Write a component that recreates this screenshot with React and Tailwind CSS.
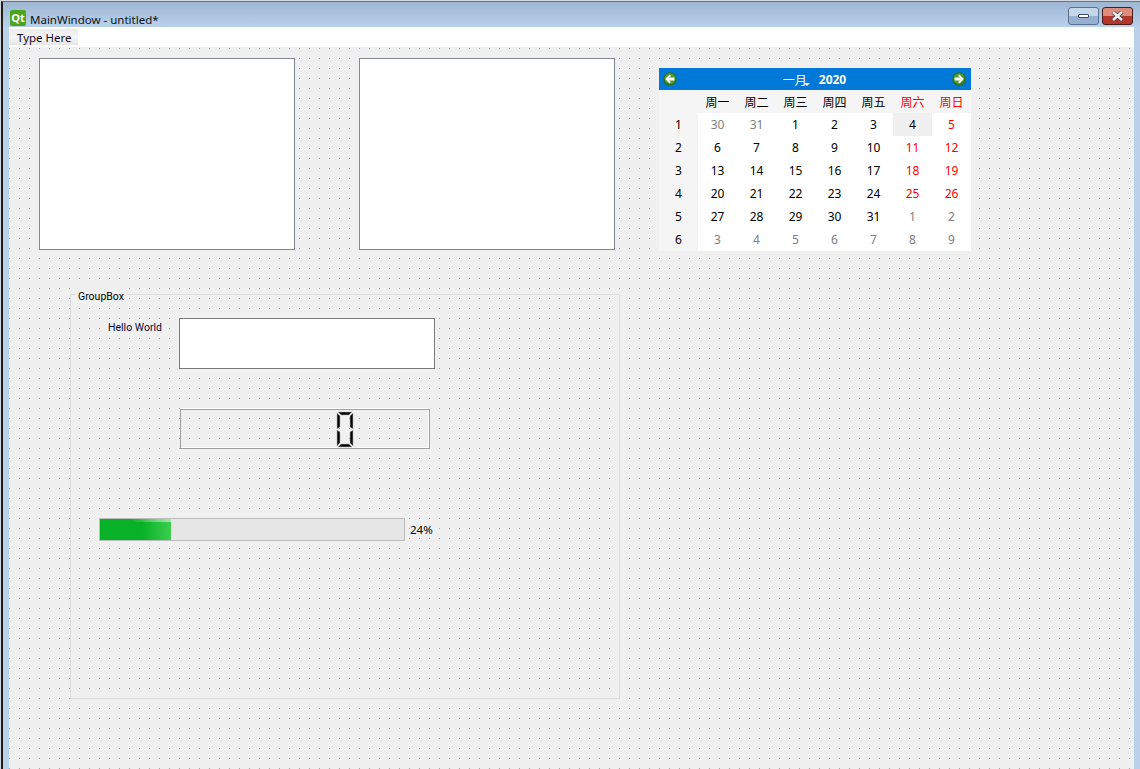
// Qt Designer form preview
const weekDays = ["周一", "周二", "周三", "周四", "周五", "周六", "周日"];

const weeks = [
  [30, 31, 1, 2, 3, 4, 5],
  [6, 7, 8, 9, 10, 11, 12],
  [13, 14, 15, 16, 17, 18, 19],
  [20, 21, 22, 23, 24, 25, 26],
  [27, 28, 29, 30, 31, 1, 2],
  [3, 4, 5, 6, 7, 8, 9],
];

const isOtherMonth = (row, col) =>
  (row === 0 && col < 2) || (row === 4 && col > 4) || row === 5;

const NavArrow = ({ flip }) => (
  <svg width="14" height="14" viewBox="0 0 14 14" className={flip ? "-scale-x-100" : ""}>
    <circle cx="7" cy="7" r="6.8" fill="#2a7418" />
    <circle cx="7" cy="6.6" r="5.4" fill="#4f9c30" />
    <path d="M2.2 7 L6.6 2.6 L8 4 L6 5.6 L11.4 5.6 L11.4 8.4 L6 8.4 L8 10 L6.6 11.4 Z" fill="#ffffff" />
  </svg>
);

const Calendar = () => (
  <div className="mt-[10px] ml-[44px] w-[312px] h-[183px] font-['Noto_Sans','Noto_Sans_CJK_SC',sans-serif] text-[12px]">
    {/* header */}
    <div className="h-[22px] bg-[#0078d7] flex items-center justify-between pl-[4px] pr-[5px] text-white">
      <NavArrow />
      <div className="flex items-center font-bold pt-[2px]">
        <span className="relative font-['Noto_Sans_CJK_SC',sans-serif] font-normal">
          一月
          <span className="absolute right-[-3px] bottom-[3px] w-0 h-0 border-x-[3px] border-x-transparent border-t-[3px] border-t-white" />
        </span>
        <span className="ml-[12px]">2020</span>
      </div>
      <NavArrow flip />
    </div>

    <div className="grid grid-cols-[repeat(8,39px)] auto-rows-[23px] bg-white">
      <div className="bg-[#f5f5f5]" />
      {weekDays.map((d, i) => (
        <div
          key={d}
          className={`bg-[#f5f5f5] flex items-center justify-center font-['Noto_Sans_CJK_SC',sans-serif] ${i > 4 ? "text-[#ff0000]" : "text-black"}`}
        >
          {d}
        </div>
      ))}
      {weeks.map((week, r) => [
        <div key={`n${r}`} className="bg-[#f5f5f5] flex items-center justify-center text-black">
          {r + 1}
        </div>,
        ...week.map((day, c) => {
          const selected = r === 0 && c === 5;
          let color = "text-black";
          if (isOtherMonth(r, c)) color = "text-[#808080]";
          else if (c > 4 && !selected) color = "text-[#ff0000]";
          return (
            <div
              key={`${r}-${c}`}
              className={`flex items-center justify-center ${color} ${selected ? "bg-[#f0f0f0]" : ""}`}
            >
              {day}
            </div>
          );
        }),
      ])}
    </div>
  </div>
);

const LcdZero = () => (
  <svg width="18" height="37" viewBox="0 0 18 37">
    <g fill="#000" stroke="#b5b5b5" strokeWidth="0.6">
      <path d="M2 1 L16 1 L13 4 L5 4 Z" />
      <path d="M2 36 L16 36 L13 33 L5 33 Z" />
      <path d="M1 2 L4 5 L4 16 L1 18 Z" />
      <path d="M1 19 L4 21 L4 32 L1 35 Z" />
      <path d="M17 2 L14 5 L14 16 L17 18 Z" />
      <path d="M17 19 L14 21 L14 32 L17 35 Z" />
    </g>
  </svg>
);

export default function App() {
  return (
    <div className="w-[1140px] h-[769px] overflow-hidden bg-[#d4d8de] pl-[1px] pt-[1px]">
      <div className="h-full bg-[#b9d1ea] border-l-[2px] border-t-[1px] border-l-[#1c1c1c] border-t-[#6d7480] font-['Noto_Sans',sans-serif] text-[11.5px] text-black flex flex-col">
        {/* title bar */}
        <div className="h-[25px] shrink-0 flex items-start pl-[7px] pr-[7px] bg-[linear-gradient(#9db6d2,#b9d1ea)]">
          <div className="w-[16px] h-[16px] mt-[8px] rounded-[2px] bg-[#4ba51c] text-white text-[11px] font-bold leading-[15px] text-center">
            Qt
          </div>
          <span className="ml-[4px] mt-[9px] leading-[17px] text-[#0b1524]">MainWindow - untitled*</span>
          <div className="ml-auto flex gap-[3px] mt-[5px] ml-auto">
            <div className="w-[31px] h-[18px] rounded-[3px] border border-[#5c6f8c] bg-[linear-gradient(#c4d6ea_50%,#96b0cf_50%)] flex items-center justify-center">
              <div className="w-[11px] h-[4px] border border-[#3e4a5c] bg-white rounded-[1px]" />
            </div>
            <div className="w-[31px] h-[18px] rounded-[3px] border border-[#4a1d1a] bg-[linear-gradient(#dc8b7c_50%,#b5372a_50%)] flex items-center justify-center">
              <svg width="13" height="10" viewBox="0 0 13 10">
                <path d="M2 1 L11 9 M11 1 L2 9" stroke="#3e3e46" strokeWidth="4" />
                <path d="M2 1 L11 9 M11 1 L2 9" stroke="#f0f0f2" strokeWidth="2.6" />
              </svg>
            </div>
          </div>
        </div>

        {/* body */}
        <div className="flex-1 ml-[6px] mr-[6px] flex flex-col min-h-0">
          {/* menu bar */}
          <div className="h-[20px] shrink-0 bg-white pt-[2px]">
            <div className="w-[69px] h-[16px] bg-[linear-gradient(#ececec,#f5f5f5_50%,#e6e6e6)] pl-[8px] leading-[18px] text-[#140a1e]">
              Type Here
            </div>
          </div>

          {/* form canvas with the designer grid */}
          <div className="flex-1 min-h-0 bg-[#a0a0a0] bg-[linear-gradient(90deg,#f0f0f0_9px,transparent_9px),linear-gradient(#f0f0f0_9px,transparent_9px)] bg-[size:10px_10px] bg-[position:-9px_-8px]">
            <div className="flex items-start pl-[30px] pt-[11px]">
              <div className="w-[256px] h-[192px] bg-white border border-[#828790]" />
              <div className="w-[256px] h-[192px] ml-[64px] bg-white border border-[#828790]" />
              <Calendar />
            </div>

            {/* group box */}
            <div className="relative ml-[61px] mt-[43px] w-[550px] h-[405px] border border-[#dcdcdc]">
              <span className="absolute left-[4px] top-[-7px] px-[3px] h-[17px] leading-[17px] bg-[#f0f0f0] font-['Roboto',sans-serif] text-[10.5px]">
                GroupBox
              </span>

              <div className="flex items-start mt-[23px]">
                <span className="ml-[37px] w-[71px] mt-[1px] leading-[17px] text-[#0a0a3c] font-['Roboto',sans-serif] text-[10.5px]">
                  Hello World
                </span>
                <div className="w-[256px] h-[51px] bg-white border border-[#7a7a7a]" />
              </div>

              <div className="ml-[109px] mt-[40px] w-[250px] h-[40px] border border-[#a0a0a0] shadow-[inset_-1px_-1px_0_#ffffff,0_-1px_0_#ffffff] flex items-center pl-[155px]">
                <LcdZero />
              </div>

              <div className="flex items-center ml-[28px] mt-[69px]">
                <div className="w-[306px] h-[23px] border border-[#bcbcbc] bg-[#e6e6e6]">
                  <div className="relative w-[71px] h-full bg-[linear-gradient(90deg,#09b128_60%,#3ccf50)]">
                    <div className="absolute inset-x-0 top-0 h-[3px] bg-[linear-gradient(90deg,transparent_45%,#9fe5aa)]" />
                  </div>
                </div>
                <span className="ml-[5px]">24%</span>
              </div>
            </div>
          </div>
        </div>
      </div>
    </div>
  );
}
